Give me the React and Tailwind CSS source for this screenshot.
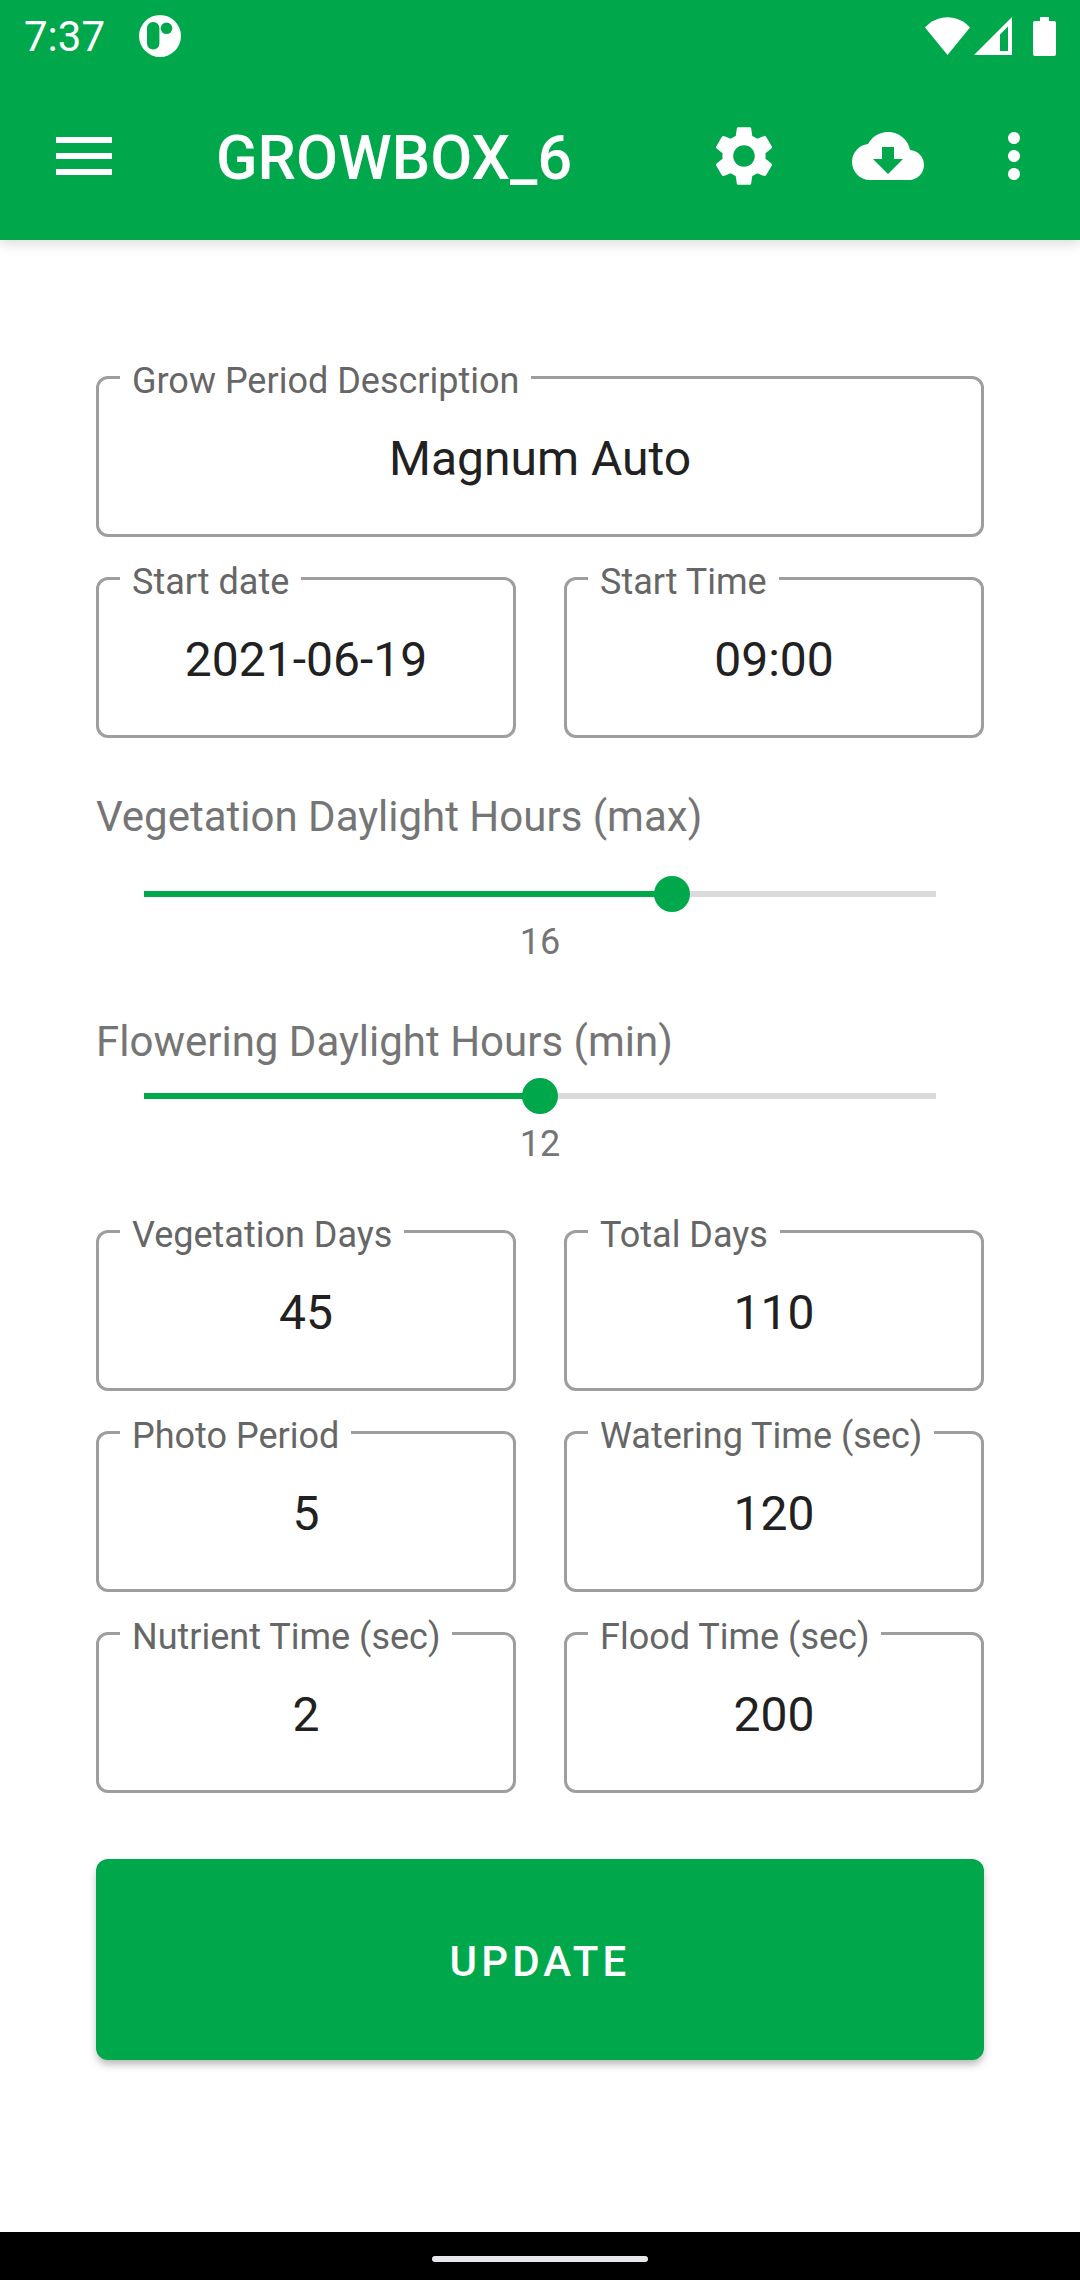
import { useState } from 'react';
import { MdSettings, MdCloudDownload, MdMoreVert } from 'react-icons/md';

const StatusBar = () => (
  <div className="flex h-[72px] items-center justify-between px-6">
    <div className="flex items-center gap-[34px]">
      <span className="text-[42px] leading-[49px]">7:37</span>
      <svg viewBox="0 0 42 42" className="size-[42px]" aria-hidden="true">
        <circle cx="21" cy="21" r="21" fill="#fff" />
        <rect x="8" y="7" width="12.4" height="27.4" rx="6" fill="#00a84b" />
        <circle cx="27.5" cy="13.3" r="5.8" fill="#00a84b" />
      </svg>
    </div>
    <div className="flex items-center">
      <svg viewBox="0 0 45 38" className="h-[38px] w-[45px]" aria-hidden="true">
        <path d="M0 10.5C6 4 14 0.3 22.5 0.3S39 4 45 10.5L22.5 38z" fill="#fff" />
      </svg>
      <svg viewBox="0 0 38 38" className="ml-1 size-[38px]" aria-hidden="true">
        <path d="M38 0v38H0zM34 9.5l-8 8V34h8z" fill="#fff" fillRule="evenodd" />
      </svg>
      <svg viewBox="0 0 23 39" className="ml-[21px] h-[39px] w-[23px]" aria-hidden="true">
        <path d="M7 0h9v4h5a2 2 0 0 1 2 2v31a2 2 0 0 1-2 2H2a2 2 0 0 1-2-2V6a2 2 0 0 1 2-2h5z" fill="#fff" />
      </svg>
    </div>
  </div>
);

const Toolbar = () => (
  <div className="flex h-[168px] items-center pr-3">
    <button type="button" aria-label="Open menu" className="flex h-full w-[168px] items-center justify-center">
      <svg viewBox="0 0 56 38" className="h-[38px] w-14" fill="#fff" aria-hidden="true">
        <rect width="56" height="6" />
        <rect y="16" width="56" height="6" />
        <rect y="32" width="56" height="6" />
      </svg>
    </button>
    <h1 className="flex-1 pt-1 pl-12 text-[61px] font-medium leading-[70px]">GROWBOX_6</h1>
    <button type="button" aria-label="Settings" className="flex h-full w-36 items-center justify-center">
      <MdSettings size={72} />
    </button>
    <button type="button" aria-label="Download" className="flex h-full w-36 items-center justify-center">
      <MdCloudDownload size={72} />
    </button>
    <button type="button" aria-label="More options" className="flex h-full w-27 items-center justify-center">
      <MdMoreVert size={72} />
    </button>
  </div>
);

const Field = ({ name, label, value, onChange, wide }) => (
  <fieldset className={`min-w-0 rounded-xl border-3 border-[#9e9e9e] px-[21px] ${wide ? 'col-span-2' : ''}`}>
    <legend className="px-3 pt-2 text-4xl leading-[35px] text-[#666]">
      <label htmlFor={name}>{label}</label>
    </legend>
    <input
      id={name}
      name={name}
      type="text"
      value={value}
      onChange={onChange}
      className="mb-4 block w-full bg-transparent py-8 text-center text-5xl leading-[55px] text-[#212121] outline-none"
    />
  </fieldset>
);

const HoursSlider = ({ name, label, value, onChange, className }) => (
  <div className="mt-[54px] flex flex-col text-[#757575]">
    <label htmlFor={name} className={`text-[42px] leading-[49px] ${className}`}>{label}</label>
    <div className="mx-[30px] grid items-center">
      {/* track is inset by half a thumb on both sides */}
      <div className="mx-[18px] h-1.5 bg-[#dbdbdb] [grid-area:1/1]">
        <div className="h-full bg-[#00a84b]" style={{ width: `${(value / 24) * 100}%` }} />
      </div>
      <input
        id={name}
        name={name}
        type="range"
        min="0"
        max="24"
        value={value}
        onChange={onChange}
        className="h-9 w-full appearance-none bg-transparent [grid-area:1/1] [&::-webkit-slider-thumb]:size-9 [&::-webkit-slider-thumb]:appearance-none [&::-webkit-slider-thumb]:rounded-full [&::-webkit-slider-thumb]:bg-[#00a84b]"
      />
    </div>
    <output htmlFor={name} className="mt-[9px] text-center text-4xl leading-[42px]">{value}</output>
  </div>
);

const App = () => {
  const [form, setForm] = useState({
    description: 'Magnum Auto',
    startDate: '2021-06-19',
    startTime: '09:00',
    vegetationHours: 16,
    floweringHours: 12,
    vegetationDays: '45',
    totalDays: '110',
    photoPeriod: '5',
    wateringTime: '120',
    nutrientTime: '2',
    floodTime: '200',
  });

  const bind = (name) => ({
    name,
    value: form[name],
    onChange: (e) => setForm({ ...form, [name]: e.target.value }),
  });

  return (
    <div className="flex min-h-screen flex-col bg-white font-[Roboto,sans-serif]">
      <header className="bg-[#00a84b] text-white shadow-[0_4px_12px_rgba(0,0,0,0.14)]">
        <StatusBar />
        <Toolbar />
      </header>

      <main className="flex-1 px-24 pt-[116px] pb-24">
        <form onSubmit={(e) => e.preventDefault()}>
          <div className="grid grid-cols-2 gap-x-12 gap-y-5">
            <Field label="Grow Period Description" wide {...bind('description')} />
            <Field label="Start date" {...bind('startDate')} />
            <Field label="Start Time" {...bind('startTime')} />
          </div>

          <HoursSlider label="Vegetation Daylight Hours (max)" className="mb-[35px]" {...bind('vegetationHours')} />
          <HoursSlider label="Flowering Daylight Hours (min)" className="mb-3" {...bind('floweringHours')} />

          <div className="mt-[45px] grid grid-cols-2 gap-x-12 gap-y-5">
            <Field label="Vegetation Days" {...bind('vegetationDays')} />
            <Field label="Total Days" {...bind('totalDays')} />
            <Field label="Photo Period" {...bind('photoPeriod')} />
            <Field label="Watering Time (sec)" {...bind('wateringTime')} />
            <Field label="Nutrient Time (sec)" {...bind('nutrientTime')} />
            <Field label="Flood Time (sec)" {...bind('floodTime')} />
          </div>

          <button
            type="submit"
            className="mt-[66px] w-full rounded-xl bg-[#00a84b] pt-[78px] pb-[74px] text-[42px] font-medium leading-[49px] tracking-widest text-white shadow-[0_5px_8px_-1px_rgba(0,0,0,0.3)]"
          >
            UPDATE
          </button>
        </form>
      </main>

      <div className="flex h-12 justify-center bg-black pt-6">
        <div className="h-1.5 w-[216px] rounded-full bg-[#e8e8ec]" />
      </div>
    </div>
  );
};

export default App;
